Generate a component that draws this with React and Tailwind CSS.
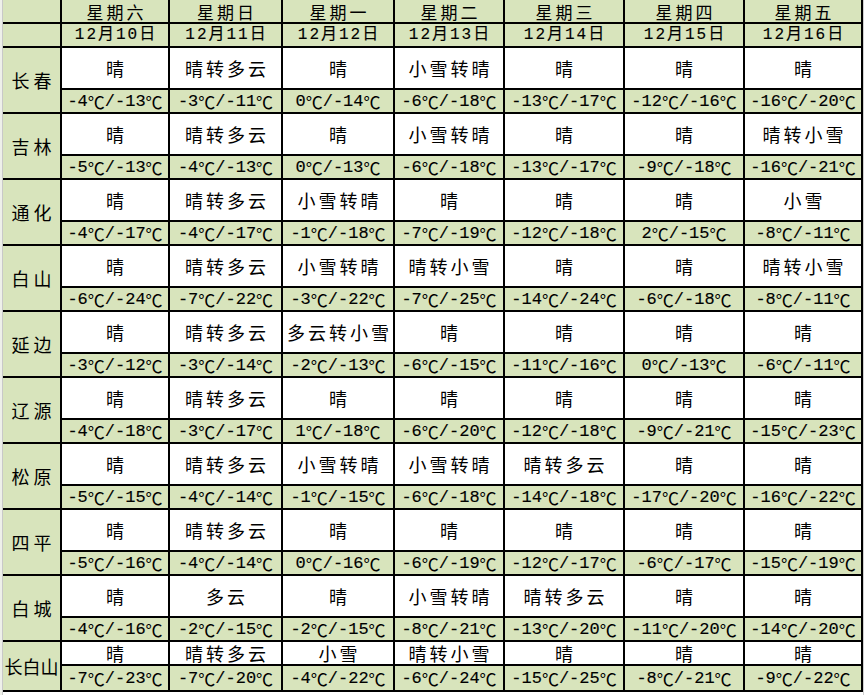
import React from 'react';

const days = [
  { week: '星期六', date: '12月10日' },
  { week: '星期日', date: '12月11日' },
  { week: '星期一', date: '12月12日' },
  { week: '星期二', date: '12月13日' },
  { week: '星期三', date: '12月14日' },
  { week: '星期四', date: '12月15日' },
  { week: '星期五', date: '12月16日' },
];

const cities = [
  {
    name: '长春',
    weather: ['晴', '晴转多云', '晴', '小雪转晴', '晴', '晴', '晴'],
    temps: ['-4℃/-13℃', '-3℃/-11℃', '0℃/-14℃', '-6℃/-18℃', '-13℃/-17℃', '-12℃/-16℃', '-16℃/-20℃'],
  },
  {
    name: '吉林',
    weather: ['晴', '晴转多云', '晴', '小雪转晴', '晴', '晴', '晴转小雪'],
    temps: ['-5℃/-13℃', '-4℃/-13℃', '0℃/-13℃', '-6℃/-18℃', '-13℃/-17℃', '-9℃/-18℃', '-16℃/-21℃'],
  },
  {
    name: '通化',
    weather: ['晴', '晴转多云', '小雪转晴', '晴', '晴', '晴', '小雪'],
    temps: ['-4℃/-17℃', '-4℃/-17℃', '-1℃/-18℃', '-7℃/-19℃', '-12℃/-18℃', '2℃/-15℃', '-8℃/-11℃'],
  },
  {
    name: '白山',
    weather: ['晴', '晴转多云', '小雪转晴', '晴转小雪', '晴', '晴', '晴转小雪'],
    temps: ['-6℃/-24℃', '-7℃/-22℃', '-3℃/-22℃', '-7℃/-25℃', '-14℃/-24℃', '-6℃/-18℃', '-8℃/-11℃'],
  },
  {
    name: '延边',
    weather: ['晴', '晴转多云', '多云转小雪', '晴', '晴', '晴', '晴'],
    temps: ['-3℃/-12℃', '-3℃/-14℃', '-2℃/-13℃', '-6℃/-15℃', '-11℃/-16℃', '0℃/-13℃', '-6℃/-11℃'],
  },
  {
    name: '辽源',
    weather: ['晴', '晴转多云', '晴', '晴', '晴', '晴', '晴'],
    temps: ['-4℃/-18℃', '-3℃/-17℃', '1℃/-18℃', '-6℃/-20℃', '-12℃/-18℃', '-9℃/-21℃', '-15℃/-23℃'],
  },
  {
    name: '松原',
    weather: ['晴', '晴转多云', '小雪转晴', '小雪转晴', '晴转多云', '晴', '晴'],
    temps: ['-5℃/-15℃', '-4℃/-14℃', '-1℃/-15℃', '-6℃/-18℃', '-14℃/-18℃', '-17℃/-20℃', '-16℃/-22℃'],
  },
  {
    name: '四平',
    weather: ['晴', '晴转多云', '晴', '晴', '晴', '晴', '晴'],
    temps: ['-5℃/-16℃', '-4℃/-14℃', '0℃/-16℃', '-6℃/-19℃', '-12℃/-17℃', '-6℃/-17℃', '-15℃/-19℃'],
  },
  {
    name: '白城',
    weather: ['晴', '多云', '晴', '小雪转晴', '晴转多云', '晴', '晴'],
    temps: ['-4℃/-16℃', '-2℃/-15℃', '-2℃/-15℃', '-8℃/-21℃', '-13℃/-20℃', '-11℃/-20℃', '-14℃/-20℃'],
  },
  {
    name: '长白山',
    weather: ['晴', '晴转多云', '小雪', '晴转小雪', '晴', '晴', '晴'],
    temps: ['-7℃/-23℃', '-7℃/-20℃', '-4℃/-22℃', '-6℃/-24℃', '-15℃/-25℃', '-8℃/-21℃', '-9℃/-22℃'],
  },
];

const cjk = "font-['Noto_Sans_CJK_SC',sans-serif]";
const mono = "font-['Liberation_Mono','Noto_Sans_CJK_SC',monospace] [-webkit-text-stroke:0.15px_#000]";

const green = 'bg-[#d8e4bc]';

// ℃ 用中文字体显示，宽度和原表一致
const Temp = ({ text }) => {
  const parts = text.split('℃');
  return parts.map((p, i) => (
    <React.Fragment key={i}>
      {p}
      {i < parts.length - 1 && <span className={`${cjk} [-webkit-text-stroke:0px]`}>℃</span>}
    </React.Fragment>
  ));
};

const App = () => {
  return (
    <div className="w-[865px] h-[695px] bg-white overflow-hidden flex text-black">
      <div className="w-[2px] h-full bg-[#eef0ea]" />
      <div className="w-px h-full bg-[#c8c8c8]" />
      <div className="h-[692px] bg-black pr-[2px] pb-[2px] grid grid-cols-[57px_106px_111px_110px_108px_118px_118px_116px] grid-rows-[22px_22px_repeat(9,40px_22px)_22px_24px] gap-[2px]">
        {/* 表头：星期 */}
        <div className={green} />
        {days.map(d => (
          <div key={d.week} className={`${green} ${cjk} flex items-center justify-center text-[17px] leading-none tracking-[3px] pl-[3px]`}>
            {d.week}
          </div>
        ))}

        {/* 表头：日期 */}
        <div className={green} />
        {days.map(d => (
          <div key={d.date} className={`${green} ${mono} flex items-center justify-center text-[16px] leading-none tracking-[2px] pl-[2px] whitespace-nowrap`}>
            {d.date}
          </div>
        ))}

        {cities.map(city => (
          <React.Fragment key={city.name}>
            <div
              className={`${green} ${cjk} row-span-2 flex items-center justify-center text-[18px] leading-none whitespace-nowrap ${
                city.name.length > 2 ? 'tracking-normal' : 'tracking-[4px] pl-[4px]'
              }`}
            >
              {city.name}
            </div>
            {city.weather.map((w, i) => (
              <div key={'w' + i} className={`bg-white ${cjk} flex items-center justify-center text-[18px] leading-none tracking-[3px] pl-[3px] whitespace-nowrap`}>
                {w}
              </div>
            ))}
            {city.temps.map((t, i) => (
              <div key={'t' + i} className={`${green} ${mono} flex items-center justify-center text-[17px] leading-none whitespace-nowrap`}>
                <Temp text={t} />
              </div>
            ))}
          </React.Fragment>
        ))}
      </div>
      <div className="w-px h-full bg-[#d0d0d0]" />
    </div>
  );
};

export default App;
